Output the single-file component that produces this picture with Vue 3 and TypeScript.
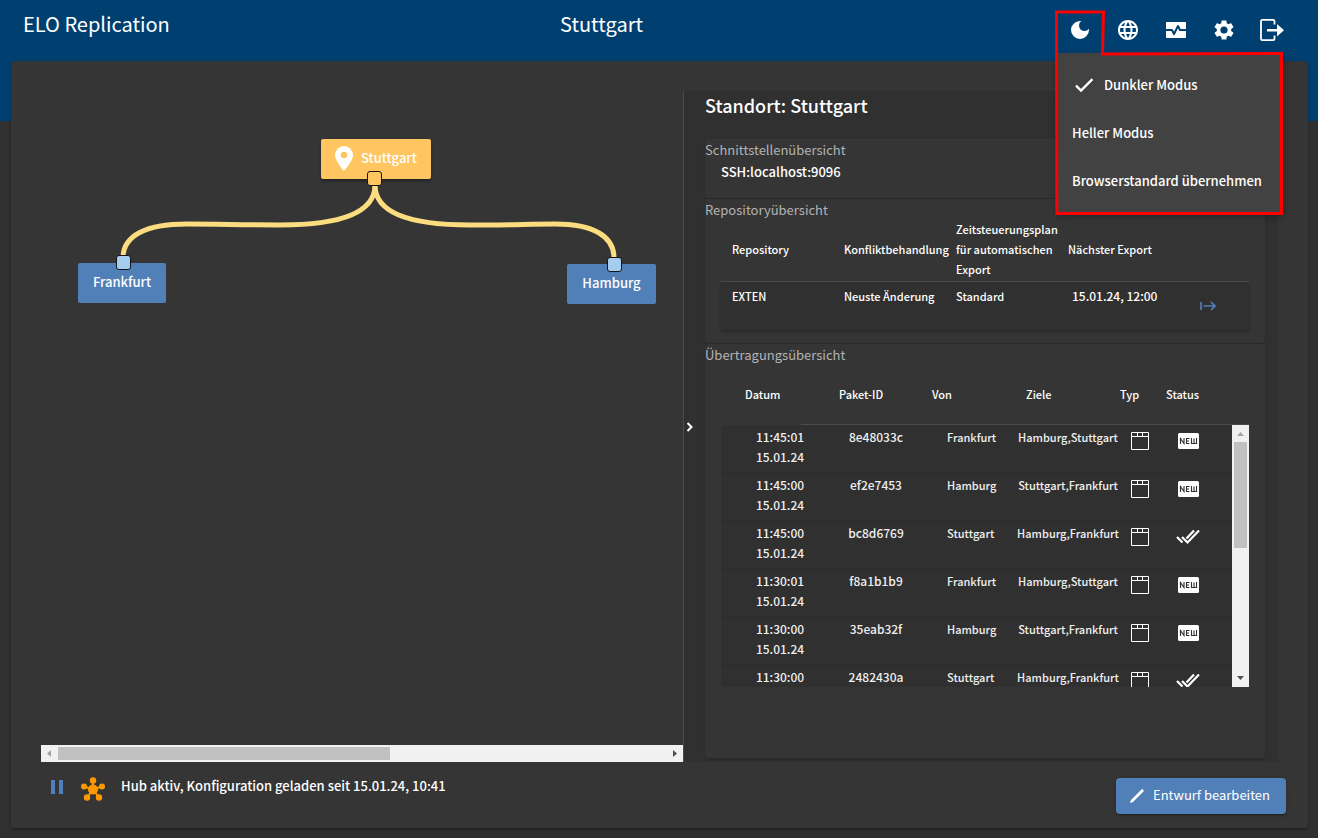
<script setup lang="ts">
import { ref } from 'vue'

interface Transfer {
  time: string
  date: string
  id: string
  from: string
  targets: string
  status: 'new' | 'done'
}

const themes = ['Dunkler Modus', 'Heller Modus', 'Browserstandard übernehmen']
const activeTheme = ref(themes[0])

const tools = [
  {
    label: 'Sprache',
    path: 'M11.99 2C6.47 2 2 6.48 2 12s4.47 10 9.99 10C17.52 22 22 17.52 22 12S17.52 2 11.99 2zm6.93 6h-2.95a15.65 15.65 0 0 0-1.38-3.56A8.03 8.03 0 0 1 18.92 8zM12 4.04c.83 1.2 1.48 2.53 1.91 3.96h-3.82c.43-1.43 1.08-2.76 1.91-3.96zM4.26 14a8.24 8.24 0 0 1 0-4h3.38a16.5 16.5 0 0 0 0 4H4.26zm.82 2h2.95c.32 1.25.78 2.45 1.38 3.56A7.99 7.99 0 0 1 5.08 16zm2.95-8H5.08a7.99 7.99 0 0 1 4.33-3.56A15.65 15.65 0 0 0 8.03 8zM12 19.96c-.83-1.2-1.48-2.53-1.91-3.96h3.82A14.09 14.09 0 0 1 12 19.96zM14.34 14H9.66a14.7 14.7 0 0 1 0-4h4.68a14.6 14.6 0 0 1 0 4zm.25 5.56c.6-1.11 1.06-2.31 1.38-3.56h2.95a8.03 8.03 0 0 1-4.33 3.56zM16.36 14a16.5 16.5 0 0 0 0-4h3.38a8.24 8.24 0 0 1 0 4h-3.38z',
  },
  {
    label: 'Monitor',
    path: 'M15.11 12.45 14 10.24l-3.11 6.21a1 1 0 0 1-1.79 0L7.38 13H2v6a1 1 0 0 0 1 1h18a1 1 0 0 0 1-1v-6h-6a1 1 0 0 1-.89-.55zM21 4H3a1 1 0 0 0-1 1v6h6c.38 0 .73.21.89.55L10 13.76l3.11-6.21a1 1 0 0 1 1.79 0L16.62 11H22V5a1 1 0 0 0-1-1z',
  },
  {
    label: 'Einstellungen',
    path: 'M19.14 12.94c.04-.3.06-.61.06-.94s-.02-.64-.07-.94l2.03-1.58a.49.49 0 0 0 .12-.61l-1.92-3.32a.49.49 0 0 0-.59-.22l-2.39.96a7.03 7.03 0 0 0-1.62-.94l-.36-2.54a.48.48 0 0 0-.48-.41h-3.84a.47.47 0 0 0-.47.41l-.36 2.54c-.59.24-1.13.57-1.62.94l-2.39-.96a.48.48 0 0 0-.59.22L2.74 8.87a.47.47 0 0 0 .12.61l2.03 1.58a6 6 0 0 0 0 1.88l-2.03 1.58a.49.49 0 0 0-.12.61l1.92 3.32c.12.22.37.29.59.22l2.39-.96c.5.38 1.03.7 1.62.94l.36 2.54c.05.24.24.41.48.41h3.84c.24 0 .44-.17.47-.41l.36-2.54a6.8 6.8 0 0 0 1.62-.94l2.39.96c.22.08.47 0 .59-.22l1.92-3.32a.47.47 0 0 0-.12-.61l-2.01-1.58zM12 15.6a3.6 3.6 0 1 1 0-7.2 3.6 3.6 0 0 1 0 7.2z',
  },
]

const repositories = [
  { name: 'EXTEN', conflict: 'Neuste Änderung', schedule: 'Standard', next: '15.01.24, 12:00' },
]

const transfers: Transfer[] = [
  { time: '11:45:01', date: '15.01.24', id: '8e48033c', from: 'Frankfurt', targets: 'Hamburg,Stuttgart', status: 'new' },
  { time: '11:45:00', date: '15.01.24', id: 'ef2e7453', from: 'Hamburg', targets: 'Stuttgart,Frankfurt', status: 'new' },
  { time: '11:45:00', date: '15.01.24', id: 'bc8d6769', from: 'Stuttgart', targets: 'Hamburg,Frankfurt', status: 'done' },
  { time: '11:30:01', date: '15.01.24', id: 'f8a1b1b9', from: 'Frankfurt', targets: 'Hamburg,Stuttgart', status: 'new' },
  { time: '11:30:00', date: '15.01.24', id: '35eab32f', from: 'Hamburg', targets: 'Stuttgart,Frankfurt', status: 'new' },
  { time: '11:30:00', date: '', id: '2482430a', from: 'Stuttgart', targets: 'Hamburg,Frankfurt', status: 'done' },
]
</script>

<template>
  <div class="page">
    <header class="topbar">
      <h1 class="app-name">ELO Replication</h1>
      <p class="site-name">Stuttgart</p>
      <nav class="tools">
        <button class="tool" type="button" aria-label="Farbschema">
          <svg viewBox="0 0 24 24" width="24" height="24"><path d="M12 3a9 9 0 1 0 9 9c0-.46-.04-.92-.1-1.36a5.39 5.39 0 0 1-4.4 2.26 5.4 5.4 0 0 1-3.14-9.8c-.44-.06-.9-.1-1.36-.1z" /></svg>
        </button>
        <button v-for="tool in tools" :key="tool.label" class="tool" type="button" :aria-label="tool.label">
          <svg viewBox="0 0 24 24" width="24" height="24"><path :d="tool.path" /></svg>
        </button>
        <button class="tool" type="button" aria-label="Abmelden">
          <svg viewBox="0 0 24 24" width="24" height="24">
            <path d="M14.500 6.500V3a1.300 1.300 0 0 0-1.300-1.200H2.200A1.300 1.300 0 0 0 1 3v18a1.300 1.300 0 0 0 1.200 1.200h11a1.300 1.300 0 0 0 1.300-1.200v-3.500" fill="none" stroke="#fff" stroke-width="1.800" />
            <path d="M7 11h10V6l7 6.200-7 6.300v-5H7z" />
          </svg>
        </button>
        <div class="menu" role="menu">
          <button v-for="theme in themes" :key="theme" class="menu-item" type="button" role="menuitemradio" :aria-checked="theme === activeTheme" @click="activeTheme = theme">
            <svg v-if="theme === activeTheme" viewBox="0 0 24 24" width="24" height="24"><path d="M9 16.170 4.830 12l-1.420 1.410L9 19 21 7l-1.410-1.410z" stroke="#fff" stroke-width=".5" /></svg>
            <span>{{ theme }}</span>
          </button>
        </div>
        <svg class="outline" viewBox="0 0 230 208" width="230" height="208">
          <path d="M2.500 3H49.500L48.500 45 227.500 44.500V204.500H2.800z" fill="none" stroke="#f00" stroke-width="3" />
        </svg>
      </nav>
    </header>

    <main class="shell">
      <div class="split">
        <section class="graph">
          <div class="canvas">
            <svg class="links" viewBox="0 0 642 240" width="642" height="240">
              <path d="M334 94C334 123 297 134 239 134C199 134 179 133 146 133C104 133 82 145 82 167" />
              <path d="M334 94C334 123 371 134 429 134C469 134 489 133 514 133C552 133 573 145 573 167" />
            </svg>
            <button class="node hub" type="button">
              <svg viewBox="0 0 18 26" width="18" height="26"><path fill-rule="evenodd" d="M9 0a9 9 0 0 0-9 9c0 6 9 16 9 16s9-10 9-16a9 9 0 0 0-9-9zm0 12.200a3.200 3.200 0 1 1 0-6.400 3.200 3.200 0 0 1 0 6.400z" /></svg>
              <span>Stuttgart</span>
            </button>
            <button class="node frankfurt" type="button">Frankfurt</button>
            <button class="node hamburg" type="button">Hamburg</button>
            <i class="port port-hub"></i>
            <i class="port port-frankfurt"></i>
            <i class="port port-hamburg"></i>
          </div>
          <div class="scroll-x">
            <svg viewBox="0 0 17 17" width="17" height="17"><path d="M10 5v7L6 8.500z" fill="#a3a3a3" /></svg>
            <div class="track"><div class="thumb"></div></div>
            <svg viewBox="0 0 17 17" width="17" height="17"><path d="M7 5v7l4-3.500z" fill="#505050" /></svg>
          </div>
        </section>

        <aside class="details">
          <button class="collapse" type="button" aria-label="Details einklappen">
            <svg viewBox="0 0 8 10" width="8" height="10"><path d="M1.500 1l4 4-4 4" fill="none" stroke="#fff" stroke-width="2" /></svg>
          </button>
          <div class="detail-body">
            <h2 class="title">Standort: Stuttgart</h2>
            <section class="card interfaces">
              <h3>Schnittstellenübersicht</h3>
              <p>SSH:localhost:9096</p>
            </section>

            <section class="card repos">
              <h3>Repositoryübersicht</h3>
              <table class="repo-table">
                <thead>
                  <tr>
                    <th>Repository</th>
                    <th>Konfliktbehandlung</th>
                    <th>Zeitsteuerungsplan für automatischen Export</th>
                    <th>Nächster Export</th>
                    <th></th>
                  </tr>
                </thead>
                <tbody>
                  <tr v-for="repo in repositories" :key="repo.name">
                    <td>{{ repo.name }}</td>
                    <td>{{ repo.conflict }}</td>
                    <td>{{ repo.schedule }}</td>
                    <td class="next">{{ repo.next }}</td>
                    <td class="action">
                      <button type="button" aria-label="Jetzt exportieren">
                        <svg viewBox="0 0 16 10" width="16" height="10"><path d="M1 1v8M3.500 5H15M11 1l4 4-4 4" fill="none" stroke="#4f7fbd" stroke-width="1.700" /></svg>
                      </button>
                    </td>
                  </tr>
                </tbody>
              </table>
            </section>

            <section class="card transfers">
              <h3>Übertragungsübersicht</h3>
              <div class="transfer-box">
                <table class="transfer-table">
                  <thead>
                    <tr>
                      <th>Datum</th>
                      <th>Paket-ID</th>
                      <th>Von</th>
                      <th>Ziele</th>
                      <th>Typ</th>
                      <th>Status</th>
                    </tr>
                  </thead>
                  <tbody>
                    <tr v-for="row in transfers" :key="row.id">
                      <td class="number">{{ row.time }}<br />{{ row.date }}</td>
                      <td class="number">{{ row.id }}</td>
                      <td class="from">{{ row.from }}</td>
                      <td>{{ row.targets }}</td>
                      <td class="icon">
                        <svg viewBox="0 0 18 18" width="18" height="18"><path d="M.5.5h17v17H.5zM.5 4.500h17M6.500.5v4M11.500.5v4" fill="none" stroke="#fff" /></svg>
                      </td>
                      <td class="icon">
                        <svg v-if="row.status === 'new'" viewBox="0 0 22 18" width="22" height="18">
                          <rect x="1" y="1" width="21" height="16" rx="1.500" fill="#fff" />
                          <path d="M3.500 12V6.500l3.500 5V6M12.500 6.500h-3v5h3M9.500 9h2.500M14.500 6v5.500h5V6M17 6.500v5" fill="none" stroke="#303030" stroke-width="1.100" />
                        </svg>
                        <svg v-else viewBox="0 0 24 18" width="24" height="18"><path d="M1 9l5.500 5.500M6 9l5.500 5.500L23 2.500M10.500 10.500l7.500-8" fill="none" stroke="#fff" stroke-width="2.200" /></svg>
                      </td>
                    </tr>
                  </tbody>
                </table>
                <div class="scroll-y">
                  <svg viewBox="0 0 17 17" width="17" height="17"><path d="M5 11h7L8.500 7z" fill="#a3a3a3" /></svg>
                  <div class="track"><div class="thumb"></div></div>
                  <svg viewBox="0 0 17 17" width="17" height="17"><path d="M5 6h7l-3.500 4z" fill="#505050" /></svg>
                </div>
              </div>
            </section>
          </div>
        </aside>
      </div>

      <footer class="status">
        <button class="pause" type="button" aria-label="Pausieren">
          <svg viewBox="0 0 12 14" width="12" height="14"><path d="M0 0h4v14H0zM8 0h4v14H8z" fill="#4f7fbd" /></svg>
        </button>
        <svg class="hub-icon" viewBox="0 0 24 24" width="24" height="24">
          <path d="M12 12.500V3M12 12.500L3 9.500M12 12.500l9-3M12 12.500l-6 8M12 12.500l6 8" stroke="#f90" stroke-width="2" />
          <circle cx="12" cy="12.500" r="5" />
          <circle cx="12" cy="3.500" r="3.200" />
          <circle cx="3" cy="9.500" r="3" />
          <circle cx="21" cy="9.500" r="3" />
          <circle cx="6" cy="20.500" r="3.200" />
          <circle cx="18" cy="20.500" r="3.200" />
        </svg>
        <p>Hub aktiv, Konfiguration geladen seit 15.01.24, 10:41</p>
        <button class="edit" type="button">
          <svg viewBox="0 0 16 16" width="16" height="16"><path d="M1 15l1-3L12.500 1.500a1 1 0 0 1 1.400 0l.5.500a1 1 0 0 1 0 1.400L4 14z" /></svg>
          <span>Entwurf bearbeiten</span>
        </button>
      </footer>
    </main>
  </div>
</template>

<style>
body {
  background: #303030;
}
</style>

<style scoped>
* {
  box-sizing: border-box;
}
.page {
  display: flex;
  flex-direction: column;
  min-height: 100vh;
  padding: 0 10px 10px 11px;
  background: linear-gradient(#004071 121px, #303030 121px);
  color: #fff;
  font-family: "Noto Sans CJK SC", "Noto Sans", sans-serif;
  font-size: 13px;
  line-height: 20px;
}
h1, h2, h3, p {
  margin: 0;
  font-weight: 400;
}
button {
  margin: 0;
  padding: 0;
  border: 0;
  background: none;
  color: inherit;
  font: inherit;
  cursor: pointer;
}
svg {
  display: block;
  flex: none;
  fill: #fff;
}
.topbar {
  position: relative;
  z-index: 2;
  display: grid;
  grid-template-columns: 1fr auto 539px;
  height: 61px;
  padding: 0 12px;
}
.app-name, .site-name {
  font-size: 20px;
  line-height: 48px;
}
.site-name {
  padding-right: 114px;
}
.tools {
  position: relative;
  display: flex;
  justify-self: end;
  align-self: start;
  width: 240px;
  padding-top: 6px;
}
.tool {
  display: flex;
  align-items: center;
  justify-content: center;
  width: 48px;
  height: 48px;
}
.menu {
  position: absolute;
  top: 53px;
  left: 1px;
  width: 226px;
  padding: 8px 0;
  background: #424242;
  box-shadow: 0 2px 4px -1px rgba(0, 0, 0, 0.2), 0 4px 5px rgba(0, 0, 0, 0.14), 0 1px 10px rgba(0, 0, 0, 0.12);
}
.menu-item {
  display: flex;
  align-items: center;
  gap: 8px;
  width: 100%;
  height: 48px;
  padding: 0 15px;
  font-weight: 500;
  white-space: nowrap;
}
.outline {
  position: absolute;
  top: 9px;
  left: -2px;
  pointer-events: none;
}
.shell {
  display: flex;
  flex: 1;
  flex-direction: column;
  padding: 30px 22px 0 30px;
  border-radius: 4px;
  background: #353535;
  box-shadow: 0 3px 1px -2px rgba(0, 0, 0, 0.2), 0 2px 2px rgba(0, 0, 0, 0.14), 0 1px 5px rgba(0, 0, 0, 0.12);
}
.split {
  display: flex;
  flex: 1;
  padding-right: 8px;
}
.graph {
  display: flex;
  flex: 642;
  flex-direction: column;
  min-width: 0;
}
.canvas {
  position: relative;
  flex: 1;
  overflow: hidden;
}
.links {
  position: absolute;
  top: 0;
  left: 0;
  fill: none;
  stroke: #fbdc7f;
  stroke-width: 5;
}
.node {
  position: absolute;
  height: 40px;
  padding-bottom: 2px;
  border-radius: 2px;
  background: #5180b9;
  font-weight: 500;
  line-height: 38px;
}
.hub {
  top: 48px;
  left: 280px;
  display: flex;
  align-items: center;
  gap: 8px;
  width: 110px;
  padding: 0 14px;
  background: #ffc560;
  box-shadow: 0 2px 3px rgba(0, 0, 0, 0.4);
}
.hub span {
  padding-bottom: 2px;
}
.frankfurt {
  top: 172px;
  left: 37px;
  width: 88px;
}
.hamburg {
  top: 173px;
  left: 526px;
  width: 89px;
}
.port {
  position: absolute;
  width: 15px;
  height: 15px;
  border: 1px solid #151515;
  border-radius: 3px;
  background: #a5cdef;
}
.port-hub {
  top: 80px;
  left: 326px;
  background: #ffc560;
}
.port-frankfurt {
  top: 164px;
  left: 75px;
}
.port-hamburg {
  top: 166px;
  left: 566px;
}
.scroll-x {
  display: flex;
  height: 17px;
  background: #f1f1f1;
}
.track {
  flex: 1;
}
.thumb {
  background: #c1c1c1;
}
.scroll-x .thumb {
  width: 332px;
  height: 13px;
  margin-top: 2px;
}
.details {
  display: flex;
  flex: 594;
  min-width: 0;
  border-left: 1px solid #4b4b4b;
  background: #303030;
}
.collapse {
  display: flex;
  align-items: center;
  width: 21px;
  padding-left: 2px;
}
.detail-body {
  display: flex;
  flex: 1;
  flex-direction: column;
  min-width: 0;
  padding: 0 13px 4px 0;
}
.title {
  height: 48px;
  font-size: 18px;
  font-weight: 500;
  line-height: 28px;
}
.card {
  margin-bottom: 1px;
  border-radius: 4px;
  background: #353535;
  box-shadow: 0 2px 2px rgba(0, 0, 0, 0.08), 0 1px 4px rgba(0, 0, 0, 0.06);
}
.card h3 {
  font-size: 13px;
  line-height: 22px;
  color: #b3b3b3;
}
.interfaces {
  height: 59px;
}
.interfaces p {
  padding-left: 16px;
  font-weight: 500;
  line-height: 22px;
}
.repos {
  padding: 0 16px 13px;
}
.repos h3, .transfers h3 {
  margin-left: -16px;
}
.repos h3 {
  height: 20px;
}
table {
  width: 100%;
  border-spacing: 0;
  font-size: 11px;
  font-weight: 500;
}
th {
  padding: 0;
  font-weight: 500;
  text-align: left;
}
td {
  padding: 0;
}
.repo-table {
  table-layout: fixed;
}
.repo-table th {
  height: 63px;
  padding: 0 0 2px 11px;
  border-bottom: 1px solid #4b4b4b;
}
.repo-table th:last-child {
  width: 80px;
}
.repo-table td {
  height: 48px;
  padding: 4px 0 0 11px;
  background: #303030;
  vertical-align: top;
}
.repo-table tbody {
  box-shadow: 0 2px 3px rgba(0, 0, 0, 0.25);
}
.repo-table .next {
  padding-left: 15px;
  font-size: 12px;
}
.repo-table .action {
  padding: 19px 0 0 31px;
}
.action button {
  display: block;
}
.transfers {
  flex: 1;
  margin: 0;
  padding: 0 16px 71px;
}
.transfer-box {
  position: relative;
}
.transfer-table, .transfer-table thead, .transfer-table tbody {
  display: block;
}
.transfer-table thead tr {
  display: grid;
  grid-template-columns: 106fr 93fr 94fr 94fr 46fr 95fr;
  height: 59px;
  background: linear-gradient(#4b4b4b, #4b4b4b) 80px 100% / 100% 1px no-repeat;
}
.transfer-table th {
  line-height: 56px;
}
.transfer-table th:first-child {
  padding-left: 24px;
}
.transfer-table th:not(:first-child) {
  padding-left: 12px;
}
.transfer-table tbody {
  height: 262px;
  margin-right: 17px;
  overflow: hidden;
  border-radius: 4px 0 0 0;
}
.transfer-table tbody tr {
  display: grid;
  grid-template-columns: 118fr 74fr 92fr 126fr 18fr 78fr 5fr;
  height: 48px;
  padding-top: 2px;
  background: #303030;
  box-shadow: inset 0 -1px 1px rgba(0, 0, 0, 0.08);
  color: #f0f0f0;
  text-align: center;
  white-space: nowrap;
}
.transfer-table .number {
  font-size: 12px;
}
.transfer-table .from {
  padding-left: 34px;
  text-align: left;
}
.transfer-table .icon {
  display: flex;
  justify-content: center;
  padding-top: 5px;
}
.scroll-y {
  position: absolute;
  right: 0;
  bottom: 0;
  display: flex;
  flex-direction: column;
  height: 262px;
  background: #f1f1f1;
}
.scroll-y .thumb {
  width: 13px;
  height: 106px;
  margin-left: 2px;
}
.status {
  display: flex;
  align-items: flex-start;
  height: 66px;
  padding: 14px 0 0 10px;
}
.pause {
  margin: 4px 18px 0 0;
}
.hub-icon {
  margin-top: 1px;
  fill: #f90;
}
.status p {
  flex: 1;
  padding-left: 16px;
  font-weight: 500;
}
.edit {
  display: flex;
  align-items: center;
  gap: 8px;
  height: 36px;
  margin-top: 2px;
  padding: 0 16px 0 13px;
  border-radius: 4px;
  background: #5180b9;
  box-shadow: 0 3px 1px -2px rgba(0, 0, 0, 0.2), 0 2px 2px rgba(0, 0, 0, 0.14), 0 1px 5px rgba(0, 0, 0, 0.12);
}
.edit span {
  padding-bottom: 2px;
}
</style>
